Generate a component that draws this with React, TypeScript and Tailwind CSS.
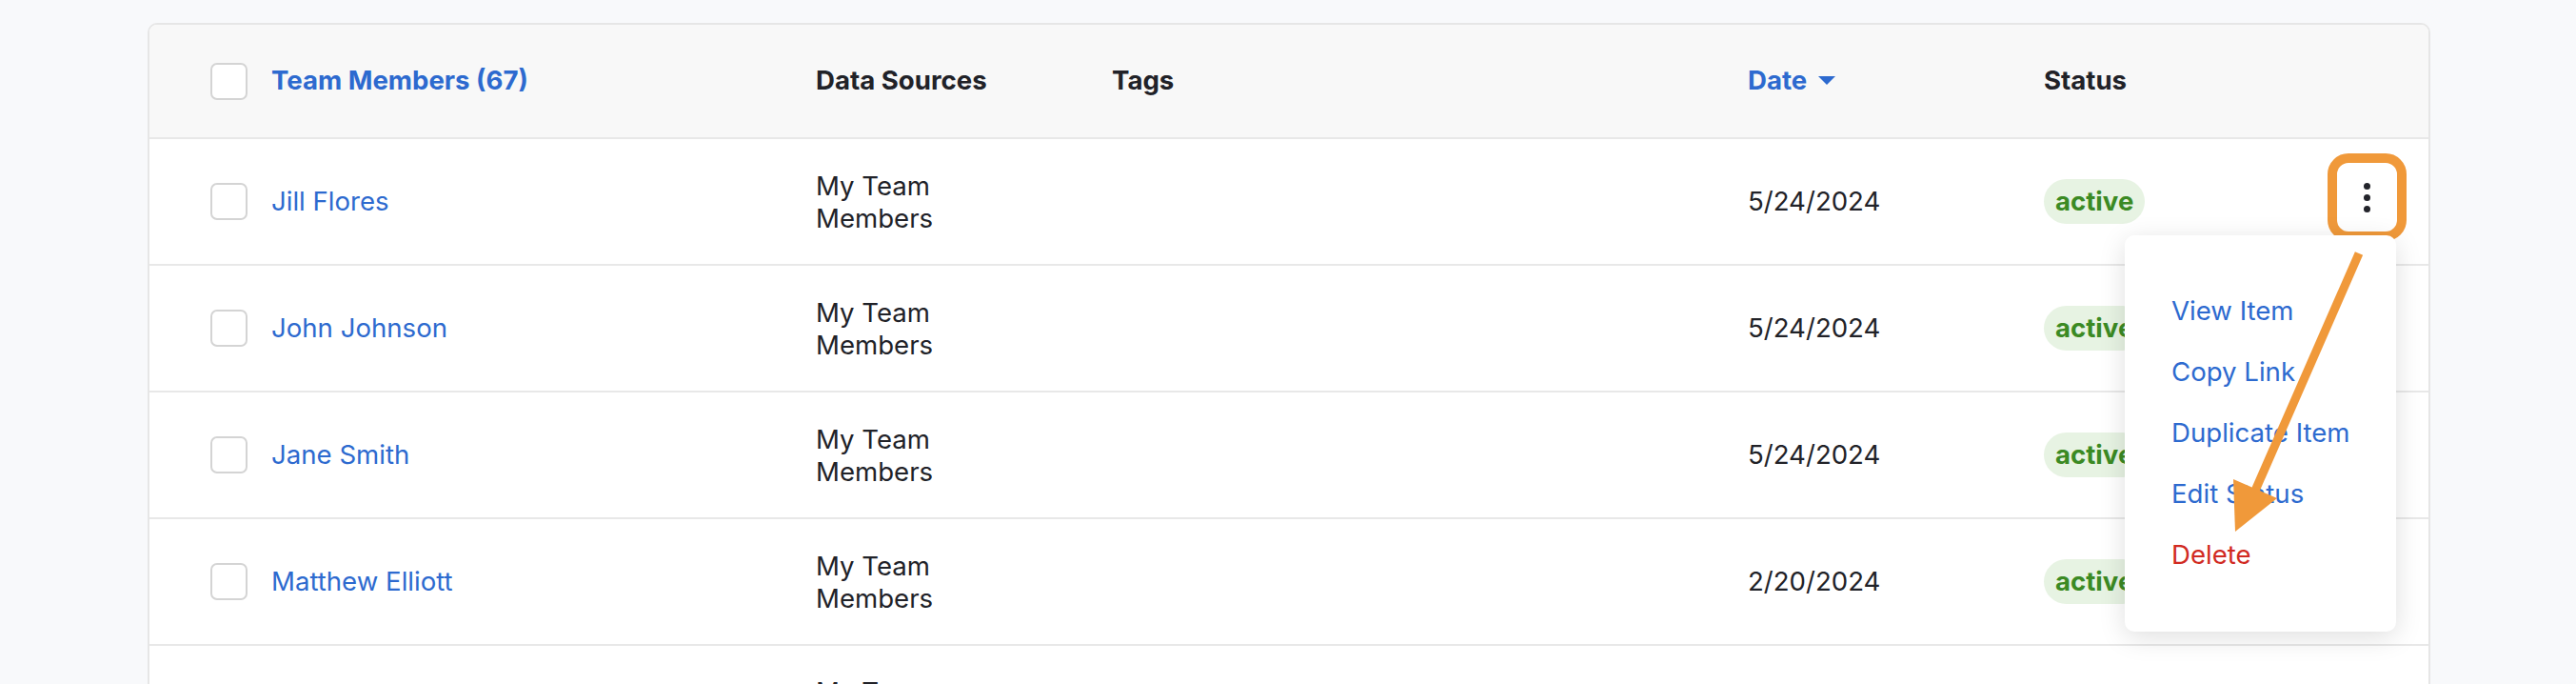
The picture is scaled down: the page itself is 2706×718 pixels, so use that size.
import React from "react";

const rows = [
  { name: "Jill Flores", date: "5/24/2024" },
  { name: "John Johnson", date: "5/24/2024" },
  { name: "Jane Smith", date: "5/24/2024" },
  { name: "Matthew Elliott", date: "2/20/2024" },
];

function Checkbox() {
  return (
    <div className="w-[39px] h-[39px] shrink-0 rounded-[7px] border-2 border-[#d4d4d4] bg-white" />
  );
}

export default function App() {
  return (
    <div
      className="relative w-[2706px] h-[718px] overflow-hidden bg-[#f8f9fb] text-[27.6px] text-[#212228]"
      style={{ fontFamily: "Inter, 'Noto Sans', sans-serif" }}
    >
      <div className="relative ml-[155px] mt-[24px] w-[2398px] rounded-t-[10px] border-2 border-[#e6e6e6] bg-white">
        {/* header */}
        <div className="grid grid-cols-[636px_311px_668px_311px_1fr] items-center h-[120px] pl-[64px] bg-[#f8f8f8] border-b-2 border-[#e8e8e8] rounded-t-[8px] font-bold leading-none">
          <div className="flex items-center gap-[25px]">
            <Checkbox />
            <span className="text-[#2d6acf]">Team Members (67)</span>
          </div>
          <div>Data Sources</div>
          <div>Tags</div>
          <div className="flex items-center gap-[12px] text-[#2d6acf]">
            <span>Date</span>
            <svg width="18" height="10" viewBox="0 0 18 10">
              <polygon points="0,0 18,0 9,9" fill="#2d6acf" />
            </svg>
          </div>
          <div>Status</div>
        </div>

        {rows.map((r, i) => (
          <div
            key={i}
            className="grid grid-cols-[636px_311px_668px_311px_1fr] items-center h-[133px] pl-[64px] border-b-2 border-[#e8e8e8]"
          >
            <div className="flex items-center gap-[25px]">
              <Checkbox />
              <span className="text-[#2d6acf] leading-none">{r.name}</span>
            </div>
            <div className="max-w-[160px] leading-[34px]">My Team Members</div>
            <div />
            <div className="leading-none">{r.date}</div>
            <div className="flex items-center justify-between pr-[23px]">
              <span className="inline-flex items-center h-[47px] px-[12px] rounded-full bg-[#e7f3e3] text-[#3b8a24] font-bold leading-none">
                active
              </span>
              {i === 0 && (
                <button className="mb-[9px] flex flex-col items-center justify-center gap-[5px] w-[83px] h-[92px] rounded-[22px] border-[10px] border-[#f0993a] bg-white">
                  <span className="block w-[7px] h-[7px] rounded-full bg-[#23242b]" />
                  <span className="block w-[7px] h-[7px] rounded-full bg-[#23242b]" />
                  <span className="block w-[7px] h-[7px] rounded-full bg-[#23242b]" />
                </button>
              )}
            </div>
          </div>
        ))}

        {/* partially visible fifth row */}
        <div className="grid grid-cols-[636px_311px_668px_311px_1fr] h-[133px] pl-[64px] pt-[31px]">
          <div />
          <div className="max-w-[160px] leading-[34px]">My Team Members</div>
        </div>

        {/* dropdown menu */}
        <div className="absolute top-[221px] right-[34px] w-[285px] h-[416px] py-[48px] pl-[49px] rounded-[10px] bg-white shadow-[0_6px_28px_rgba(0,0,0,0.13)]">
          {["View Item", "Copy Link", "Duplicate Item", "Edit Status"].map((t) => (
            <div key={t} className="h-[64px] flex items-center text-[#2d6acf]">
              {t}
            </div>
          ))}
          <div className="h-[64px] flex items-center text-[#d12a22]">Delete</div>
        </div>
      </div>

      {/* annotation arrow */}
      <svg
        className="absolute left-0 top-0 pointer-events-none"
        width="2706"
        height="718"
        viewBox="0 0 2706 718"
      >
        <line x1="2478" y1="266" x2="2369" y2="515" stroke="#f0993a" strokeWidth="9" />
        <polygon points="2346,503 2392,523 2348,558" fill="#f0993a" />
      </svg>
    </div>
  );
}
